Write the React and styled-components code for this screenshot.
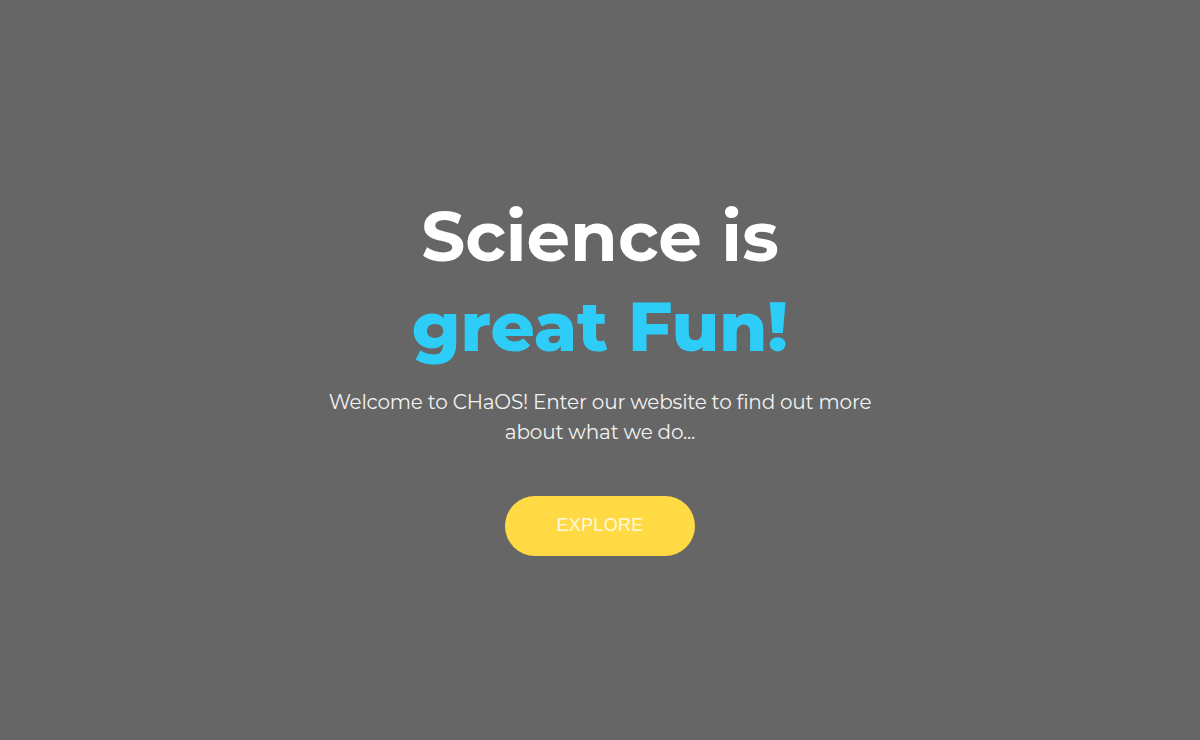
import React from "react";
import styled, { createGlobalStyle } from "styled-components";

const GlobalStyle = createGlobalStyle`
  html, body {
    margin: 0;
    padding: 0;
    background: #666666;
  }
  body {
    font-family: "Montserrat", "DejaVu Sans", sans-serif;
  }
`;

const App = () => {
  return (
    <>
      <GlobalStyle />
      <Hero>
        <Content>
          <Title>
            Science is
            <Highlight>great Fun!</Highlight>
          </Title>
          <Description>
            Welcome to CHaOS! Enter our website to find out more about what we
            do...
          </Description>
          <ExploreButton>Explore</ExploreButton>
        </Content>
      </Hero>
    </>
  );
};

const Hero = styled.section`
  height: 740px;
  display: flex;
  align-items: center;
  justify-content: center;
  text-align: center;
`;

const Content = styled.div`
  width: 580px;
  display: flex;
  flex-direction: column;
  align-items: center;
  padding-top: 6px;
`;

const Title = styled.h1`
  margin: 0;
  font-weight: bold;
  font-size: 69px;
  line-height: 90px;
  color: #ffffff;
`;

const Highlight = styled.span`
  display: block;
  color: #2ecdf8;
  font-weight: 800;
`;

const Description = styled.p`
  margin: 16px 0 0;
  font-size: 20px;
  line-height: 30px;
  color: #f2f2f2;
  letter-spacing: -0.2px;
`;

const ExploreButton = styled.button`
  margin-top: 49px;
  width: 190px;
  height: 60px;
  border: none;
  border-radius: 30px;
  background: #ffda44;
  color: #fff9e0;
  font-family: "Liberation Sans", Arial, sans-serif;
  font-size: 18px;
  letter-spacing: 0.3px;
  text-transform: uppercase;
  cursor: pointer;
`;

export default App;
